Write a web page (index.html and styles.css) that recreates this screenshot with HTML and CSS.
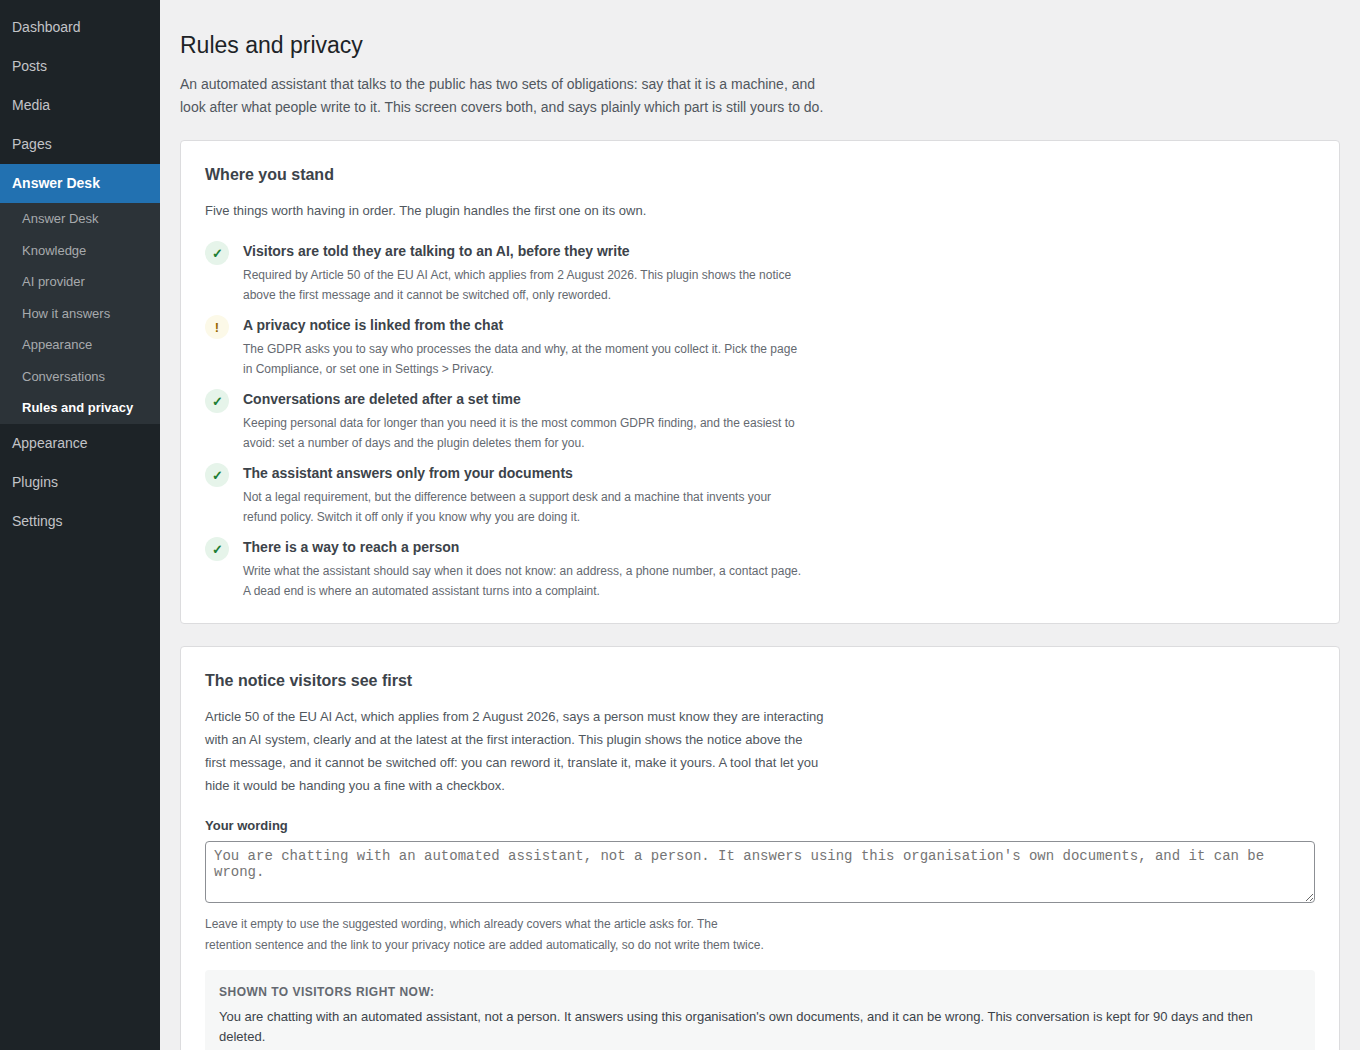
FILE: index.html
```html
<!DOCTYPE html>
<html lang="en">
<head>
<meta charset="utf-8">
<meta name="viewport" content="width=device-width, initial-scale=1">
<title>Rules and privacy</title>
<link rel="stylesheet" href="styles.css">
</head>
<body>
<div class="layout">
  <nav class="menu" aria-label="Main menu">
    <a class="menu-item" href="#">Dashboard</a>
    <a class="menu-item" href="#">Posts</a>
    <a class="menu-item" href="#">Media</a>
    <a class="menu-item" href="#">Pages</a>
    <a class="menu-item menu-item-current" href="#">Answer Desk</a>
    <div class="submenu">
      <a class="submenu-item" href="#">Answer Desk</a>
      <a class="submenu-item" href="#">Knowledge</a>
      <a class="submenu-item" href="#">AI provider</a>
      <a class="submenu-item" href="#">How it answers</a>
      <a class="submenu-item" href="#">Appearance</a>
      <a class="submenu-item" href="#">Conversations</a>
      <a class="submenu-item submenu-item-current" href="#" aria-current="page">Rules and privacy</a>
    </div>
    <a class="menu-item" href="#">Appearance</a>
    <a class="menu-item" href="#">Plugins</a>
    <a class="menu-item" href="#">Settings</a>
  </nav>

  <main class="content">
    <h1 class="page-title">Rules and privacy</h1>
    <p class="intro">An automated assistant that talks to the public has two sets of obligations: say that it is a machine, and look after what people write to it. This screen covers both, and says plainly which part is still yours to do.</p>

    <section class="card">
      <h2 class="card-title">Where you stand</h2>
      <p class="card-text">Five things worth having in order. The plugin handles the first one on its own.</p>
      <ul class="checks">
        <li class="check">
          <span class="badge badge-ok">✓</span>
          <div class="check-body">
            <h3 class="check-title">Visitors are told they are talking to an AI, before they write</h3>
            <p class="check-text">Required by Article 50 of the EU AI Act, which applies from 2 August 2026. This plugin shows the notice above the first message and it cannot be switched off, only reworded.</p>
          </div>
        </li>
        <li class="check">
          <span class="badge badge-warn">!</span>
          <div class="check-body">
            <h3 class="check-title">A privacy notice is linked from the chat</h3>
            <p class="check-text">The GDPR asks you to say who processes the data and why, at the moment you collect it. Pick the page in Compliance, or set one in Settings &gt; Privacy.</p>
          </div>
        </li>
        <li class="check">
          <span class="badge badge-ok">✓</span>
          <div class="check-body">
            <h3 class="check-title">Conversations are deleted after a set time</h3>
            <p class="check-text">Keeping personal data for longer than you need it is the most common GDPR finding, and the easiest to avoid: set a number of days and the plugin deletes them for you.</p>
          </div>
        </li>
        <li class="check">
          <span class="badge badge-ok">✓</span>
          <div class="check-body">
            <h3 class="check-title">The assistant answers only from your documents</h3>
            <p class="check-text">Not a legal requirement, but the difference between a support desk and a machine that invents your refund policy. Switch it off only if you know why you are doing it.</p>
          </div>
        </li>
        <li class="check">
          <span class="badge badge-ok">✓</span>
          <div class="check-body">
            <h3 class="check-title">There is a way to reach a person</h3>
            <p class="check-text">Write what the assistant should say when it does not know: an address, a phone number, a contact page. A dead end is where an automated assistant turns into a complaint.</p>
          </div>
        </li>
      </ul>
    </section>

    <section class="card">
      <h2 class="card-title">The notice visitors see first</h2>
      <p class="card-text">Article 50 of the EU AI Act, which applies from 2 August 2026, says a person must know they are interacting with an AI system, clearly and at the latest at the first interaction. This plugin shows the notice above the first message, and it cannot be switched off: you can reword it, translate it, make it yours. A tool that let you hide it would be handing you a fine with a checkbox.</p>
      <label class="field-label" for="wording">Your wording</label>
      <textarea class="field-input" id="wording" rows="3" aria-describedby="wording-help" placeholder="You are chatting with an automated assistant, not a person. It answers using this organisation's own documents, and it can be wrong."></textarea>
      <p class="field-help" id="wording-help">Leave it empty to use the suggested wording, which already covers what the article asks for. The retention sentence and the link to your privacy notice are added automatically, so do not write them twice.</p>
      <div class="preview">
        <strong class="preview-label">Shown to visitors right now:</strong>
        <p class="preview-text">You are chatting with an automated assistant, not a person. It answers using this organisation's own documents, and it can be wrong. This conversation is kept for 90 days and then deleted.</p>
      </div>
    </section>
  </main>
</div>
</body>
</html>
```

FILE: styles.css
```css
* {
  box-sizing: border-box;
}

body {
  margin: 0;
  background: #f0f0f1;
  color: #3c434a;
  font: 13px/1.5 "Liberation Sans", Arial, sans-serif;
}

h1, h2, h3, p, ul {
  margin: 0;
  padding: 0;
}

.layout {
  display: flex;
  min-height: 100vh;
}

/* Side menu */
.menu {
  flex: 0 0 160px;
  padding-top: 8px;
  background: #1d2327;
}

.menu-item {
  display: block;
  padding: 9px 12px;
  color: #c3c4c7;
  font-size: 14px;
  text-decoration: none;
}

.menu-item-current {
  background: #2271b1;
  color: #fff;
  font-weight: 700;
}

.submenu {
  background: #2c3338;
}

.submenu-item {
  display: block;
  padding: 6px 22px;
  color: #a7aaad;
  text-decoration: none;
}

.submenu-item-current {
  color: #fff;
  font-weight: 700;
}

/* Page */
.content {
  flex: 1;
  min-width: 0;
  padding: 30px 20px 0;
}

.page-title {
  margin-bottom: 13px;
  color: #1d2327;
  font-size: 23px;
  font-weight: 400;
  line-height: 30px;
}

.intro {
  max-width: 660px;
  margin-bottom: 21px;
  color: #50575e;
  font-size: 14px;
  line-height: 23px;
}

.card {
  margin-bottom: 22px;
  padding: 22px 24px;
  background: #fff;
  border: 1px solid #dcdcde;
  border-radius: 4px;
}

.card-title {
  margin-bottom: 12px;
  font-size: 16px;
  line-height: 24px;
}

.card-text {
  max-width: 620px;
  margin-bottom: 19px;
  color: #50575e;
  font-size: 13px;
  line-height: 23px;
}

/* Checklist */
.checks {
  display: grid;
  gap: 10px;
  list-style: none;
}

.check {
  display: flex;
  gap: 14px;
}

.badge {
  display: grid;
  flex: 0 0 24px;
  height: 24px;
  padding-top: 1px;
  place-items: center;
  border-radius: 50%;
  font-weight: 700;
}

.badge-ok {
  background: #e6f4ea;
  color: #1e7e34;
}

.badge-warn {
  background: #fcf9e8;
  color: #996800;
}

.check-body {
  max-width: 562px;
}

.check-title {
  margin-bottom: 3px;
  font-size: 14px;
  line-height: 21px;
}

.check-text {
  color: #646970;
  font-size: 12px;
  line-height: 20px;
}

/* Form field */
.field-label {
  display: block;
  margin-bottom: 5px;
  font-weight: 700;
  line-height: 20px;
}

.field-input {
  display: block;
  width: 100%;
  padding: 6px 8px;
  background: #fff;
  border: 1px solid #8c8f94;
  border-radius: 4px;
  color: #2c3338;
  font: 14px/16px "Liberation Mono", monospace;
}

.field-help {
  max-width: 562px;
  margin: 11px 0 14px;
  color: #646970;
  font-size: 12px;
  line-height: 21px;
}

/* Notice preview */
.preview {
  padding: 13px 14px;
  background: #f6f7f7;
  border-radius: 4px;
}

.preview-label {
  display: block;
  margin-bottom: 6px;
  color: #646970;
  font-size: 12px;
  letter-spacing: 0.04em;
  line-height: 18px;
  text-transform: uppercase;
}

.preview-text {
  font-size: 13px;
  line-height: 20px;
}
```
